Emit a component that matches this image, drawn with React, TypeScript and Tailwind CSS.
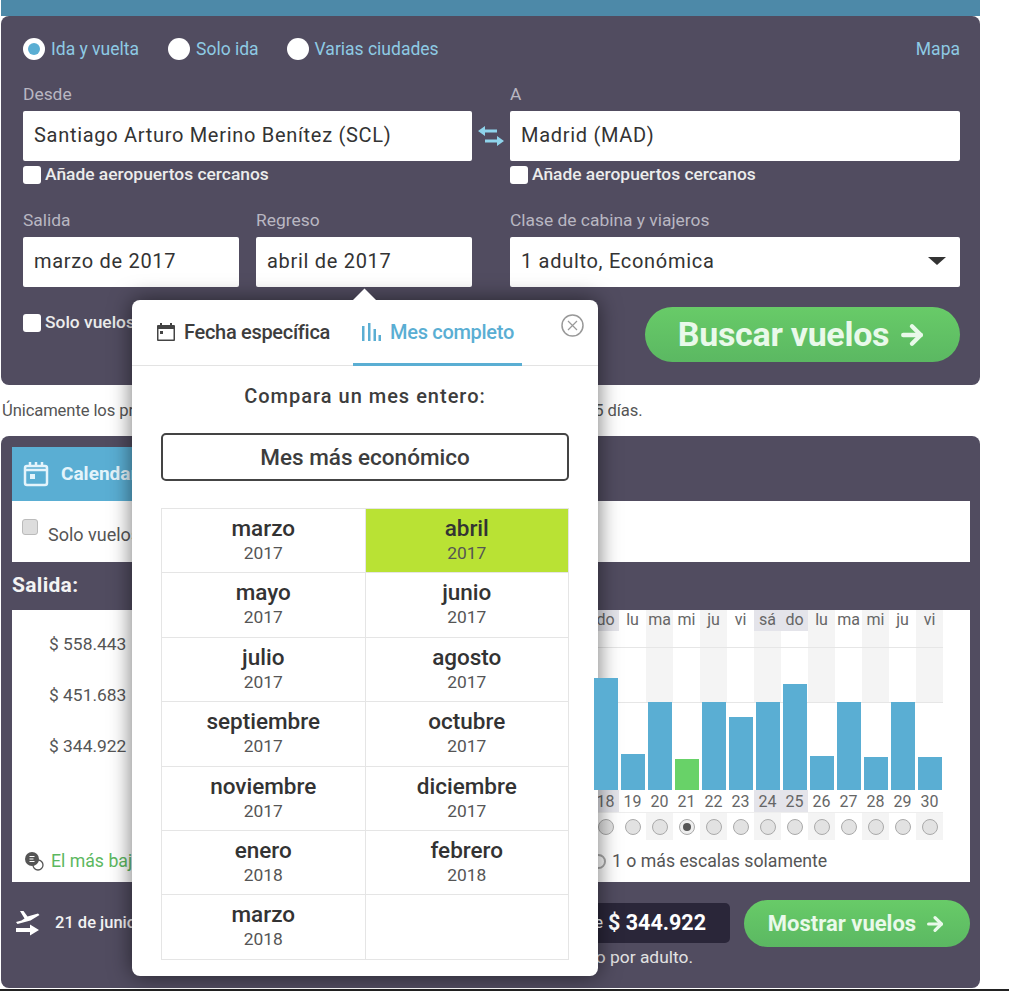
// Buscador de vuelos con el selector de "Mes completo" abierto.
import { ArrowRight } from "lucide-react";

const months = [
  ["marzo", "2017"],
  ["abril", "2017"],
  ["mayo", "2017"],
  ["junio", "2017"],
  ["julio", "2017"],
  ["agosto", "2017"],
  ["septiembre", "2017"],
  ["octubre", "2017"],
  ["noviembre", "2017"],
  ["diciembre", "2017"],
  ["enero", "2018"],
  ["febrero", "2018"],
  ["marzo", "2018"],
];

const days = [
  { name: "do", n: 18, h: 112, weekend: true },
  { name: "lu", n: 19, h: 36 },
  { name: "ma", n: 20, h: 88, stripe: true },
  { name: "mi", n: 21, h: 31, cheapest: true },
  { name: "ju", n: 22, h: 88, stripe: true },
  { name: "vi", n: 23, h: 73 },
  { name: "sá", n: 24, h: 88, weekend: true, stripe: true },
  { name: "do", n: 25, h: 106, weekend: true },
  { name: "lu", n: 26, h: 34, stripe: true },
  { name: "ma", n: 27, h: 88 },
  { name: "mi", n: 28, h: 33, stripe: true },
  { name: "ju", n: 29, h: 88 },
  { name: "vi", n: 30, h: 33, stripe: true },
];

function Radio({ label, active }: { label: string; active?: boolean }) {
  return (
    <div className="flex items-center gap-[6px]">
      <span className="flex h-[22px] w-[22px] items-center justify-center rounded-full bg-white">
        {active && <span className="h-[12px] w-[12px] rounded-full bg-[#5aaed3]" />}
      </span>
      <span className="pt-[2px] text-[17.5px] text-[#8ecae4]">{label}</span>
    </div>
  );
}

function Field({ label, value }: { label: string; value: string }) {
  return (
    <div className="flex-1">
      <div className="h-[27px] text-[17.4px] leading-[20px] text-[#b9b7c2]">{label}</div>
      <div className="flex h-[49.5px] items-center rounded-[2px] bg-white pb-[1px] pl-[11px] text-[20px] tracking-[0.7px] text-[#333]">
        {value}
      </div>
    </div>
  );
}

function Check({ label }: { label: string }) {
  return (
    <div className="flex h-[19px] items-center gap-[4px]">
      <span className="h-[18px] w-[18px] rounded-[3px] bg-white" />
      <span className="text-[17.4px] font-medium whitespace-nowrap text-[#ececec]">{label}</span>
    </div>
  );
}

function SwapIcon() {
  return (
    <svg width="26" height="20" viewBox="0 0 26 20" fill="#8fd4ec">
      <path d="M0 5l7-5v3.500h12v3H7V10z" />
      <path d="M26 15l-7-5v3.500H7v3h12V20z" />
    </svg>
  );
}

function CalendarFilled() {
  return (
    <svg width="20" height="20" viewBox="0 0 20 20">
      <path d="M2 3h16a1 1 0 0 1 1 1v14a1 1 0 0 1-1 1H2a1 1 0 0 1-1-1V4a1 1 0 0 1 1-1z" fill="#444" />
      <rect x="4" y="1" width="2" height="4" fill="#444" />
      <rect x="14" y="1" width="2" height="4" fill="#444" />
      <rect x="2.500" y="7" width="15" height="10.500" fill="#fff" />
      <rect x="4" y="9" width="3" height="3" fill="#444" />
    </svg>
  );
}

function BarsIcon() {
  return (
    <svg width="20" height="20" viewBox="0 0 20 20" fill="#5aaed3">
      <rect x="1" y="4" width="2.500" height="15" />
      <rect x="7" y="1" width="2.500" height="18" />
      <rect x="12.500" y="7" width="2.500" height="12" />
      <rect x="17.500" y="13" width="2.500" height="6" />
    </svg>
  );
}

function CalendarOutline() {
  return (
    <svg width="26" height="26" viewBox="0 0 26 26" fill="none" stroke="#e4f4fb" strokeWidth="2.500">
      <rect x="2" y="5" width="22" height="19" rx="2" />
      <path d="M2 9h22M7 1v5M13 1v5M19 1v5" />
      <rect x="7" y="13" width="5" height="5" fill="#e4f4fb" stroke="none" />
    </svg>
  );
}

function CoinIcon() {
  return (
    <svg width="20" height="22" viewBox="0 0 20 22" fill="none">
      <circle cx="14" cy="15" r="5" stroke="#555" strokeWidth="1.300" />
      <circle cx="8" cy="9" r="7" fill="#555" />
      <path d="M5.500 6.500h5M5.500 9h4M5.500 11.500h5" stroke="#fff" strokeWidth="1.200" />
    </svg>
  );
}

function PlaneIcon() {
  return (
    <svg width="24" height="26" viewBox="0 0 24 26" fill="#fff">
      <path d="M4 0l3.500 0 4 5.500L22 2.500l1.500 1.500-9 5.500-13 3.500L0 11l5.500-1.500 3-2z" />
      <path d="M0 17h14v-3.500l9 5.500-9 5.500V21H0z" />
    </svg>
  );
}

function MonthCell({ name, year, selected }: { name: string; year: string; selected?: boolean }) {
  return (
    <div
      className={
        selected
          ? "flex flex-col items-center border-r border-b border-[#e5e5e5] bg-[#b9e234] pt-[5px] text-[#333]"
          : "flex flex-col items-center border-r border-b border-[#e5e5e5] pt-[5px] text-[#333]"
      }
    >
      <div className="text-[22.5px] leading-[28px] font-medium">{name}</div>
      <div className="text-[17.4px] leading-[22px] text-[#555]">{year}</div>
    </div>
  );
}

function MonthPicker() {
  return (
    <div className="absolute top-[300px] left-[132px] h-[676px] w-[466px] rounded-[8px] bg-white shadow-[0_0_22px_rgba(0,0,0,0.55)]">
      {/* flecha hacia el campo Regreso */}
      <div className="absolute top-[-8.5px] left-[223.5px] h-[17px] w-[17px] rotate-45 bg-white" />

      <div className="relative flex h-[66px] border-b border-[#e3e3e3] pl-[24px]">
        <div className="flex items-center gap-[8px] pb-[2px]">
          <CalendarFilled />
          <span className="text-[20px] font-medium tracking-[-0.3px] text-[#3d3d3d]">Fecha específica</span>
        </div>
        <div className="mb-[-1px] ml-[23px] flex w-[169px] items-center gap-[9px] border-b-[3px] border-[#5aaed3] pl-[8px]">
          <BarsIcon />
          <span className="text-[20px] font-medium tracking-[-0.3px] text-[#5aaed3]">Mes completo</span>
        </div>
        <svg className="absolute top-[14px] right-[14px]" width="23" height="23" viewBox="0 0 23 23" fill="none" stroke="#999">
          <circle cx="11.500" cy="11.500" r="10.500" strokeWidth="1.500" />
          <path d="M7 7l9 9M16 7l-9 9" strokeWidth="1.200" />
        </svg>
      </div>

      <div className="px-[29px]">
        <div className="mt-[17px] text-center text-[20px] leading-[26px] font-medium tracking-[1px] text-[#3d3d3d]">
          Compara un mes entero:
        </div>
        <div className="mt-[24px] flex h-[48px] items-center justify-center rounded-[5px] border-2 border-[#444] pt-[1px] text-[22.5px] font-medium text-[#3d3d3d]">
          Mes más económico
        </div>
        <div className="mt-[27px] grid auto-rows-[64.4px] grid-cols-2 border-t border-l border-[#e5e5e5]">
          {months.map(([name, year], i) => (
            <MonthCell key={name + year} name={name} year={year} selected={i === 1} />
          ))}
          <div className="border-r border-b border-[#e5e5e5]" />
        </div>
      </div>
    </div>
  );
}

function DayColumn({ day }: { day: (typeof days)[number] }) {
  const head = day.weekend ? "bg-[#e4e4ea]" : day.stripe ? "bg-[#f4f4f4]" : "";
  const stripe = day.stripe ? "bg-[#f4f4f4]" : "";
  return (
    <div className="w-[27px] text-center text-[16px] text-[#666]">
      <div className={`h-[21px] leading-[20px] ${head}`}>{day.name}</div>
      <div className="relative flex h-[159px] flex-col justify-end">
        <div className={`absolute top-0 left-0 h-[71px] w-full ${stripe}`} />
        <div
          className={
            day.cheapest
              ? "relative z-10 mx-auto w-[24px] bg-[#68d268]"
              : "relative z-10 mx-auto w-[24px] bg-[#5aaed3]"
          }
          style={{ height: day.h }}
        />
      </div>
      <div className={`h-[22px] leading-[24px] ${day.weekend ? "bg-[#e4e4ea]" : ""}`}>{day.n}</div>
      <div className={`flex h-[28px] items-center justify-center border-t border-[#eee] ${stripe}`}>
        {day.cheapest ? (
          <span className="flex h-[16px] w-[16px] items-center justify-center rounded-full border border-[#aaa] bg-[#eee]">
            <span className="h-[8px] w-[8px] rounded-full bg-[#555]" />
          </span>
        ) : (
          <span className="h-[16px] w-[16px] rounded-full border border-[#aaa] bg-[#e2e2e2]" />
        )}
      </div>
    </div>
  );
}

export default function App() {
  return (
    <div className="relative h-[991px] w-[1009px] overflow-hidden bg-white font-['Roboto',sans-serif]">
      <div className="ml-[1px] h-[16px] w-[979px] bg-[#4d89a8]" />

      {/* formulario de búsqueda */}
      <section className="ml-[1px] h-[369px] w-[979px] rounded-[8px] bg-[#514c60] pt-[21px] pr-[20px] pl-[22px]">
        <div className="flex h-[23px] items-center">
          <Radio label="Ida y vuelta" active />
          <div className="ml-[29px]">
            <Radio label="Solo ida" />
          </div>
          <div className="ml-[28px]">
            <Radio label="Varias ciudades" />
          </div>
          <span className="ml-auto pt-[2px] text-[17.5px] text-[#8ecae4]">Mapa</span>
        </div>

        <div className="mt-[24px] flex">
          <div className="w-[449px]">
            <Field label="Desde" value="Santiago Arturo Merino Benítez (SCL)" />
          </div>
          <div className="flex w-[38px] items-center justify-center pt-[27px]">
            <SwapIcon />
          </div>
          <div className="w-[450px]">
            <Field label="A" value="Madrid (MAD)" />
          </div>
        </div>

        <div className="mt-[4.5px] flex">
          <div className="w-[487px]">
            <Check label="Añade aeropuertos cercanos" />
          </div>
          <Check label="Añade aeropuertos cercanos" />
        </div>

        <div className="mt-[26px] flex">
          <div className="flex w-[449px] gap-[17px]">
            <Field label="Salida" value="marzo de 2017" />
            <Field label="Regreso" value="abril de 2017" />
          </div>
          <div className="ml-[38px] w-[450px]">
            <div className="h-[27px] text-[17.4px] leading-[20px] text-[#b9b7c2]">Clase de cabina y viajeros</div>
            <div className="flex h-[49.5px] items-center justify-between rounded-[2px] bg-white pr-[14px] pb-[1px] pl-[11px] text-[20px] tracking-[0.7px] text-[#333]">
              1 adulto, Económica
              <svg width="18" height="8" viewBox="0 0 18 8" fill="#333">
                <path d="M0 0h18L9 8z" />
              </svg>
            </div>
          </div>
        </div>

        <div className="mt-[20.5px] flex items-start justify-between">
          <div className="pt-[6px]">
            <Check label="Solo vuelos directos" />
          </div>
          <button
            type="button"
            className="flex h-[55px] w-[315px] items-center justify-center gap-[8px] rounded-full bg-gradient-to-b from-[#68cb68] to-[#5bb862] text-[34px] font-bold tracking-[-0.3px] text-[#e9f9ea]"
          >
            Buscar vuelos
            <ArrowRight size={30} strokeWidth={3.5} />
          </button>
        </div>
      </section>

      <p className="flex h-[51px] items-center pt-[1px] pl-[2px] text-[16.6px] tracking-[-0.1px] whitespace-nowrap text-[#555]">
        Únicamente los precios más bajos hallados por nuestros viajeros en los últimos 45 días.
      </p>

      {/* calendario de precios */}
      <section className="ml-[1px] h-[552px] w-[979px] rounded-[8px] bg-[#514c60] pt-[11px] pr-[10px] pl-[11px]">
        <div className="flex h-[54px] w-[300px] items-center gap-[12px] bg-[#5aaed3] pl-[11px]">
          <CalendarOutline />
          <span className="text-[19px] font-bold text-[#e4f4fb]">Calendario</span>
        </div>
        <div className="flex h-[61px] bg-white pl-[10px]">
          <span className="mt-[18px] h-[16px] w-[16px] rounded-[3px] border border-[#bbb] bg-[#ddd]" />
          <span className="mt-[20px] ml-[10px] text-[18px] text-[#555]">Solo vuelos directos</span>
        </div>
        <div className="flex h-[48px] items-center text-[21px] font-bold tracking-[0.3px] text-[#f3f3f3]">Salida:</div>

        <div className="h-[272px] bg-white">
          <div className="flex h-[230px]">
            <div className="flex-1 pt-[24px] pl-[37px] text-[17.4px] leading-[20px] text-[#555]">
              <div>$ 558.443</div>
              <div className="mt-[31px]">$ 451.683</div>
              <div className="mt-[31px]">$ 344.922</div>
            </div>
            <div className="relative mr-[27px] flex">
              {days.map((day) => (
                <DayColumn key={day.n} day={day} />
              ))}
              <div className="absolute top-[37px] left-0 h-px w-full bg-[#e6e6e6]" />
              <div className="absolute top-[92px] left-0 h-px w-full bg-[#e6e6e6]" />
            </div>
          </div>
          <div className="flex items-center pt-[8px] pl-[12px] text-[17.7px]">
            <CoinIcon />
            <span className="ml-[7px] w-[540px] text-[#5cb860]">El más bajo</span>
            <span className="h-[15px] w-[15px] rounded-full border-2 border-[#aaa]" />
            <span className="ml-[6px] text-[#555]">1 o más escalas solamente</span>
          </div>
        </div>

        <div className="flex items-start pt-[18px]">
          <div className="flex h-[47px] items-center pl-[4px] text-[16.5px] font-medium text-[#f3f3f3]">
            <PlaneIcon />
            <span className="ml-[15px]">21 de junio</span>
          </div>
          <div className="ml-auto w-[330px] pt-[3px]">
            <div className="flex h-[40px] items-center justify-end rounded-[5px] bg-[#2a2639] pr-[24px] text-white">
              <span className="mr-[5px] text-[16px]">desde</span>
              <span className="text-[21.5px] font-bold">$ 344.922</span>
            </div>
            <div className="mt-[1px] pr-[37px] text-right text-[17.4px] text-[#e2e2e2]">Precio estimado por adulto.</div>
          </div>
          <button
            type="button"
            className="ml-[14px] flex h-[47px] w-[226px] items-center justify-center gap-[8px] rounded-full bg-gradient-to-b from-[#68cb68] to-[#5bb862] text-[22px] font-bold text-[#e9f9ea]"
          >
            Mostrar vuelos
            <ArrowRight size={22} strokeWidth={3.5} />
          </button>
        </div>
      </section>

      <div className="mt-[1px] h-[2px] w-full bg-[#222]" />

      <MonthPicker />
    </div>
  );
}
